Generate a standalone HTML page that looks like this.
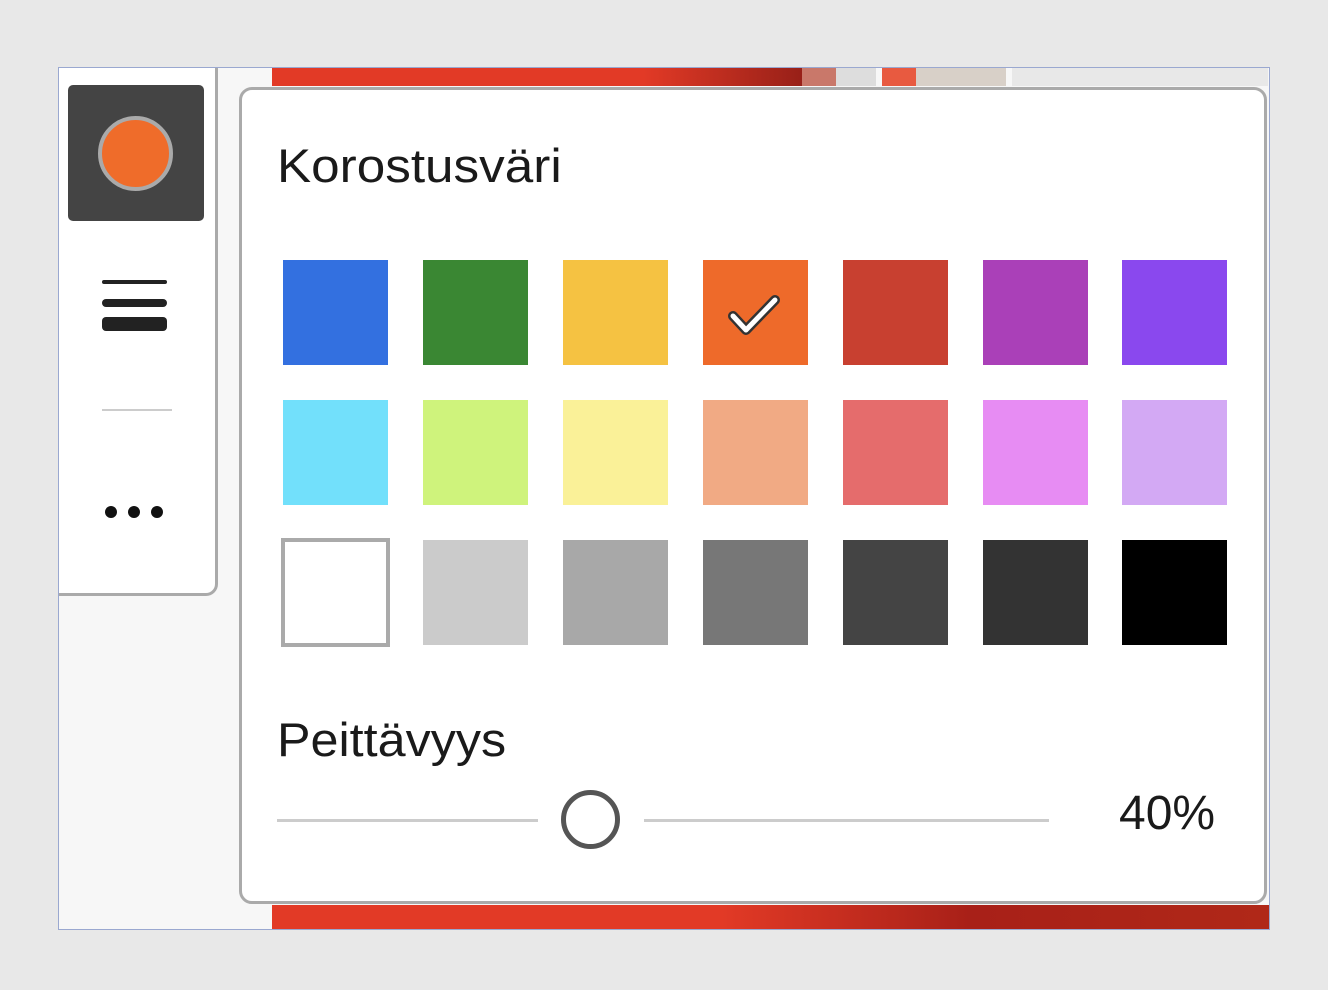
<!DOCTYPE html>
<html><head><style>
*{margin:0;padding:0;box-sizing:border-box}
body{width:1328px;height:990px;background:#e8e8e8;position:relative;overflow:hidden;font-family:"Liberation Sans",Arial,sans-serif}
.a{position:absolute}
.sw{position:absolute;width:105px;height:105px}
</style></head><body>
<div class="a" style="left:58px;top:67px;width:1212px;height:863px;background:#f7f7f7;border:1px solid #9aa8d0"></div>
<div class="a" style="left:272px;top:68px;width:530px;height:18px;background:linear-gradient(90deg,#e23a26 0%,#e23a26 70%,#982018 100%)"></div>
<div class="a" style="left:802px;top:68px;width:34px;height:18px;background:#c9786a"></div>
<div class="a" style="left:836px;top:68px;width:40px;height:18px;background:#ddd"></div>
<div class="a" style="left:882px;top:68px;width:34px;height:18px;background:#e85a40"></div>
<div class="a" style="left:916px;top:68px;width:90px;height:18px;background:#d8d0c8"></div>
<div class="a" style="left:1012px;top:68px;width:256px;height:18px;background:#e8e8e8"></div>
<div class="a" style="left:272px;top:905px;width:997px;height:24px;background:linear-gradient(90deg,#e23a26 0%,#e23a26 45%,#a82018 70%,#b02818 100%)"></div>
<!-- toolbar -->
<div class="a" style="left:59px;top:68px;width:159px;height:528px;background:#fff;border-right:3px solid #aaa;border-bottom:3px solid #aaa;border-bottom-right-radius:12px"></div>
<div class="a" style="left:68px;top:85px;width:136px;height:136px;background:#444;border-radius:5px"></div>
<div class="a" style="left:98px;top:116px;width:75px;height:75px;border-radius:50%;background:#ef6c2a;border:4px solid #aaa"></div>
<div class="a" style="left:102px;top:280px;width:65px;height:4px;background:#222;border-radius:2px"></div>
<div class="a" style="left:102px;top:299px;width:65px;height:8px;background:#222;border-radius:4px"></div>
<div class="a" style="left:102px;top:317px;width:65px;height:14px;background:#222;border-radius:4px"></div>
<div class="a" style="left:102px;top:409px;width:70px;height:2px;background:#ccc"></div>
<div class="a" style="left:105px;top:506px;width:12px;height:12px;background:#111;border-radius:50%"></div>
<div class="a" style="left:128px;top:506px;width:12px;height:12px;background:#111;border-radius:50%"></div>
<div class="a" style="left:151px;top:506px;width:12px;height:12px;background:#111;border-radius:50%"></div>
<!-- popup -->
<div class="a" style="left:239px;top:87px;width:1028px;height:817px;background:#fff;border:3px solid #aaa;border-radius:13px"></div>
<div class="a" style="left:277px;top:138px;font-size:47px;color:#1a1a1a;transform:scaleX(1.09);transform-origin:left">Korostusväri</div>
<div class="sw" style="left:283px;top:260px;background:#3370e0"></div>
<div class="sw" style="left:423px;top:260px;background:#3a8733"></div>
<div class="sw" style="left:563px;top:260px;background:#f5c242"></div>
<div class="sw" style="left:703px;top:260px;background:#ee6a2a"><svg width="105" height="105" style="position:absolute;left:0;top:0"><path d="M30 56 L43 70 L72 40" fill="none" stroke="#333" stroke-width="10" stroke-linecap="round" stroke-linejoin="round"/><path d="M30 56 L43 70 L72 40" fill="none" stroke="#fff" stroke-width="5" stroke-linecap="round" stroke-linejoin="round"/></svg></div>
<div class="sw" style="left:843px;top:260px;background:#c84030"></div>
<div class="sw" style="left:983px;top:260px;background:#aa40b8"></div>
<div class="sw" style="left:1122px;top:260px;background:#8a48ee"></div>
<div class="sw" style="left:283px;top:400px;background:#72e0fb"></div>
<div class="sw" style="left:423px;top:400px;background:#cff37c"></div>
<div class="sw" style="left:563px;top:400px;background:#faf198"></div>
<div class="sw" style="left:703px;top:400px;background:#f1aa84"></div>
<div class="sw" style="left:843px;top:400px;background:#e56c6c"></div>
<div class="sw" style="left:983px;top:400px;background:#e78cf3"></div>
<div class="sw" style="left:1122px;top:400px;background:#d3a9f4"></div>
<div class="sw" style="left:281px;top:538px;width:109px;height:109px;background:#fff;border:4px solid #aaa"></div>
<div class="sw" style="left:423px;top:540px;background:#cbcbcb"></div>
<div class="sw" style="left:563px;top:540px;background:#a8a8a8"></div>
<div class="sw" style="left:703px;top:540px;background:#777"></div>
<div class="sw" style="left:843px;top:540px;background:#444"></div>
<div class="sw" style="left:983px;top:540px;background:#333"></div>
<div class="sw" style="left:1122px;top:540px;background:#000"></div>
<div class="a" style="left:277px;top:712px;font-size:47px;color:#1a1a1a;transform:scaleX(1.07);transform-origin:left">Peittävyys</div>
<div class="a" style="left:277px;top:819px;width:261px;height:3px;background:#ccc"></div>
<div class="a" style="left:644px;top:819px;width:405px;height:3px;background:#ccc"></div>
<div class="a" style="left:561px;top:790px;width:59px;height:59px;border:5px solid #555;border-radius:50%;background:#fff"></div>
<div class="a" style="left:1119px;top:786px;font-size:48px;color:#1a1a1a">40%</div>
</body></html>
